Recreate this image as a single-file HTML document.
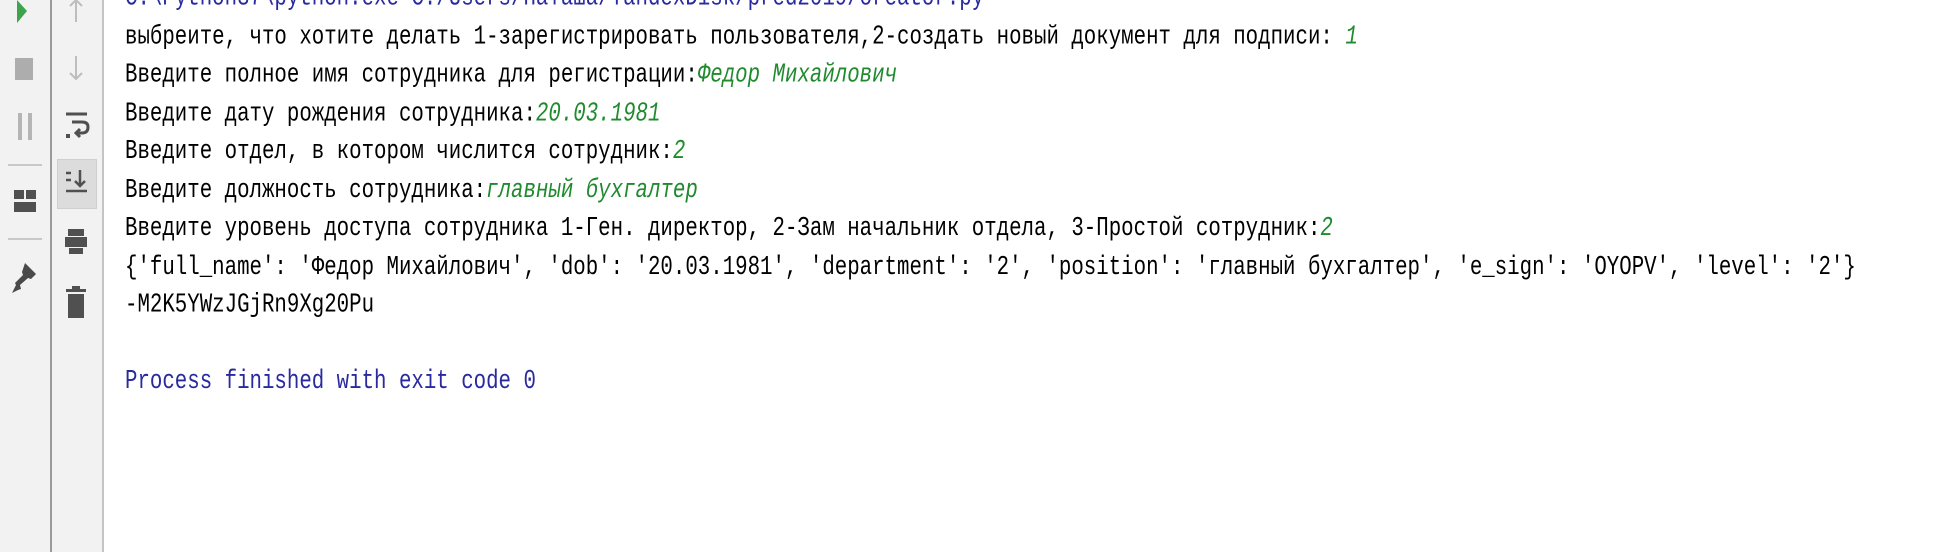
<!DOCTYPE html>
<html><head><meta charset="utf-8"><style>
html,body{margin:0;padding:0;width:1959px;height:552px;overflow:hidden;background:#fff;}
.sb{position:absolute;top:0;height:552px;background:#f2f2f2;}
.txt{position:absolute;left:125px;top:-20px;font-family:"Liberation Mono","DejaVu Sans Mono",monospace;font-size:20.75px;line-height:29.5px;transform:scaleY(1.3);transform-origin:0 0;white-space:pre;color:#000;}
.g{color:#1f8a2e;font-style:italic}
.b{color:#2a2aa0}
svg{position:absolute;left:0;top:0}
</style></head><body>
<div class="sb" style="left:0;width:50px;"></div>
<div style="position:absolute;left:50px;top:0;width:2px;height:552px;background:#9a9a9a"></div>
<div class="sb" style="left:52px;width:50px;"></div>
<div style="position:absolute;left:102px;top:0;width:2px;height:552px;background:#c4c4c4"></div>
<div style="position:absolute;left:57px;top:159px;width:38px;height:48px;background:#dcdcdc;border:1px solid #cfcfcf"></div>
<svg width="104" height="552">
<polygon points="17,0 27,11 17,23" fill="#3fa34d"/>
<rect x="15" y="58" width="18" height="22" fill="#adadad"/>
<rect x="18" y="113" width="4" height="27" fill="#b5b5b5"/><rect x="28" y="113" width="4" height="27" fill="#b5b5b5"/>
<rect x="8" y="164" width="34" height="2" fill="#c8c8c8"/>
<rect x="14" y="190" width="10" height="9" fill="#505050"/><rect x="26" y="190" width="10" height="9" fill="#505050"/><rect x="14" y="202" width="22" height="10" fill="#505050"/>
<rect x="8" y="238" width="34" height="2" fill="#c8c8c8"/>
<path d="M25,263 L36,274 L31,279 L28,278 L20,285 L21,289 L18,290 L12,293 L16,285 L15,283 L23,275 L22,272 Z" fill="#4a4a4a"/>
<path d="M76,0 V22 M70,6 L76,0 L82,6" stroke="#bdbdbd" stroke-width="2" fill="none"/>
<path d="M76,56 V79 M70,73 L76,79 L82,73" stroke="#bdbdbd" stroke-width="2" fill="none"/>
<path d="M66,114 H87 M72,122 H82 Q88,122 88,127 Q88,133 82,133 H78 M80,129 L76,133 L80,137" stroke="#505050" stroke-width="3" fill="none"/>
<rect x="66" y="134" width="4" height="4" fill="#505050"/>
<path d="M66,173 H71 M66,180 H71 M66,191 H87 M80,170 V186 M75,181 L80,186 L85,181" stroke="#505050" stroke-width="2.5" fill="none"/>
<rect x="68" y="229" width="16" height="7" fill="#505050"/><rect x="65" y="237" width="22" height="10" fill="#505050"/><rect x="69" y="248" width="14" height="6" fill="#505050"/>
<rect x="66" y="289" width="20" height="3" fill="#505050"/><rect x="72" y="286" width="8" height="3" fill="#505050"/><rect x="68" y="294" width="16" height="24" fill="#505050"/>
</svg>
<div class="txt"><span class="b">C:\Python37\python.exe C:/Users/Наташа/YandexDisk/pred2019/oreator.py</span>
выбреите, что хотите делать 1-зарегистрировать пользователя,2-создать новый документ для подписи: <span class="g">1</span>
Введите полное имя сотрудника для регистрации:<span class="g">Федор Михайлович</span>
Введите дату рождения сотрудника:<span class="g">20.03.1981</span>
Введите отдел, в котором числится сотрудник:<span class="g">2</span>
Введите должность сотрудника:<span class="g">главный бухгалтер</span>
Введите уровень доступа сотрудника 1-Ген. директор, 2-Зам начальник отдела, 3-Простой сотрудник:<span class="g">2</span>
{'full_name': 'Федор Михайлович', 'dob': '20.03.1981', 'department': '2', 'position': 'главный бухгалтер', 'e_sign': 'OYOPV', 'level': '2'}
-M2K5YWzJGjRn9Xg20Pu

<span class="b">Process finished with exit code 0</span></div>
</body></html>
